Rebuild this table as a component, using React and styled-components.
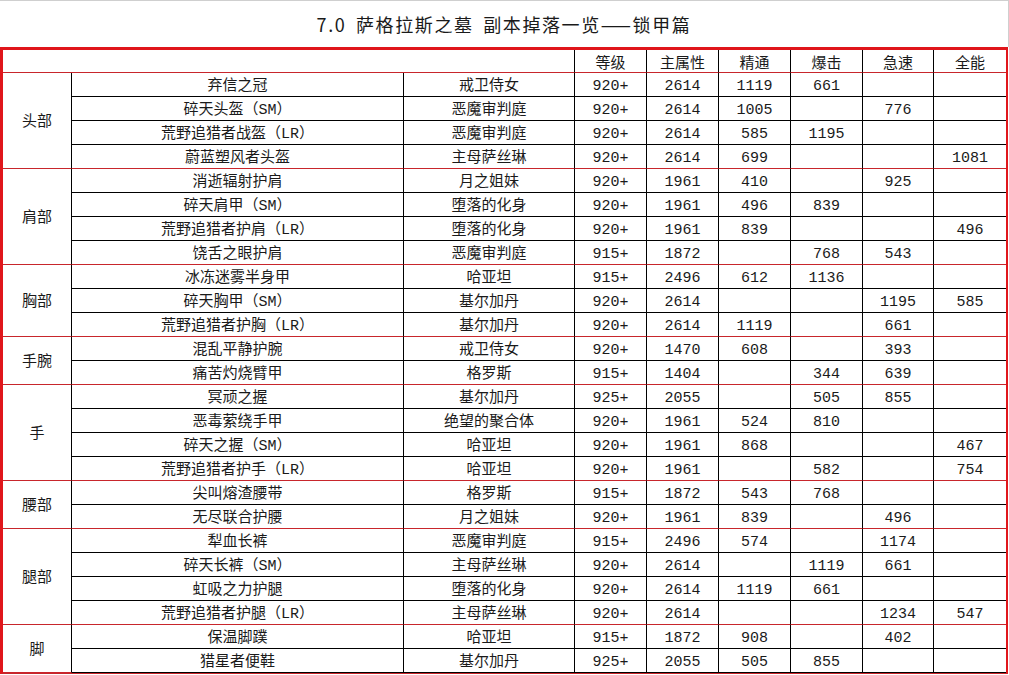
import React from 'react';
import styled, { createGlobalStyle } from 'styled-components';

const GlobalStyle = createGlobalStyle`
  html, body {
    margin: 0;
    padding: 0;
    background: #ffffff;
  }
  body {
    font-family: "Liberation Mono", "Noto Sans CJK SC", monospace;
    color: #111;
  }
`;

const RED = '#e0161b';
const LINE_RED = '#c8262c';

const Page = styled.div`
  width: 1009px;
`;

const Title = styled.div`
  height: 46px;
  border-top: 1px solid #cfcfcf;
  border-right: 1px solid #cfcfcf;
  display: flex;
  align-items: center;
  justify-content: center;
  font-family: "Noto Sans CJK SC", sans-serif;
  font-size: 18px;
  letter-spacing: 1.6px;
  word-spacing: 4px;
  color: #1a1a1a;
`;

const Sheet = styled.div`
  width: 1008px;
  box-sizing: border-box;
  border-top: 3px solid ${RED};
  border-left: 3px solid ${RED};
  border-right: 2px solid ${RED};
  border-bottom: 1px solid ${LINE_RED};
  display: grid;
  grid-template-columns: 69px 332px 171px 72px 72px 72px 72px 71px 72px;
  grid-template-rows: 23px;
  grid-auto-rows: 24px;
`;

const Cell = styled.div`
  box-sizing: border-box;
  padding-top: ${p => (p.$head ? 1 : 3)}px;
  border-right: ${p => (p.$last ? 'none' : '1px solid #000')};
  border-bottom: 1px solid ${p => (p.$sep ? LINE_RED : '#000')};
  font-size: 15px;
  line-height: 21px;
  text-align: center;
  white-space: nowrap;
  overflow: hidden;
  color: #1a1a1a;
`;

const HeadBlank = styled(Cell)`
  grid-column: span 3;
  border-bottom-color: ${LINE_RED};
`;

const HeadCell = styled(Cell)`
  border-bottom-color: ${LINE_RED};
  font-family: "Noto Sans CJK SC", sans-serif;
`;

const GroupCell = styled(Cell)`
  grid-row: span ${p => p.$span};
  padding-top: 0;
  padding-bottom: 2px;
  display: flex;
  align-items: center;
  justify-content: center;
  border-bottom-color: ${LINE_RED};
  font-family: "Noto Sans CJK SC", sans-serif;
`;

const heads = ['等级', '主属性', '精通', '爆击', '急速', '全能'];

const groups = [
  ['头部', [
    ['弃信之冠', '戒卫侍女', '920+', '2614', '1119', '661', '', ''],
    ['碎天头盔（SM）', '恶魔审判庭', '920+', '2614', '1005', '', '776', ''],
    ['荒野追猎者战盔（LR）', '恶魔审判庭', '920+', '2614', '585', '1195', '', ''],
    ['蔚蓝塑风者头盔', '主母萨丝琳', '920+', '2614', '699', '', '', '1081'],
  ]],
  ['肩部', [
    ['消逝辐射护肩', '月之姐妹', '920+', '1961', '410', '', '925', ''],
    ['碎天肩甲（SM）', '堕落的化身', '920+', '1961', '496', '839', '', ''],
    ['荒野追猎者护肩（LR）', '堕落的化身', '920+', '1961', '839', '', '', '496'],
    ['饶舌之眼护肩', '恶魔审判庭', '915+', '1872', '', '768', '543', ''],
  ]],
  ['胸部', [
    ['冰冻迷雾半身甲', '哈亚坦', '915+', '2496', '612', '1136', '', ''],
    ['碎天胸甲（SM）', '基尔加丹', '920+', '2614', '', '', '1195', '585'],
    ['荒野追猎者护胸（LR）', '基尔加丹', '920+', '2614', '1119', '', '661', ''],
  ]],
  ['手腕', [
    ['混乱平静护腕', '戒卫侍女', '920+', '1470', '608', '', '393', ''],
    ['痛苦灼烧臂甲', '格罗斯', '915+', '1404', '', '344', '639', ''],
  ]],
  ['手', [
    ['冥顽之握', '基尔加丹', '925+', '2055', '', '505', '855', ''],
    ['恶毒萦绕手甲', '绝望的聚合体', '920+', '1961', '524', '810', '', ''],
    ['碎天之握（SM）', '哈亚坦', '920+', '1961', '868', '', '', '467'],
    ['荒野追猎者护手（LR）', '哈亚坦', '920+', '1961', '', '582', '', '754'],
  ]],
  ['腰部', [
    ['尖叫熔渣腰带', '格罗斯', '915+', '1872', '543', '768', '', ''],
    ['无尽联合护腰', '月之姐妹', '920+', '1961', '839', '', '496', ''],
  ]],
  ['腿部', [
    ['犁血长裤', '恶魔审判庭', '915+', '2496', '574', '', '1174', ''],
    ['碎天长裤（SM）', '主母萨丝琳', '920+', '2614', '', '1119', '661', ''],
    ['虹吸之力护腿', '堕落的化身', '920+', '2614', '1119', '661', '', ''],
    ['荒野追猎者护腿（LR）', '主母萨丝琳', '920+', '2614', '', '', '1234', '547'],
  ]],
  ['脚', [
    ['保温脚蹼', '哈亚坦', '915+', '1872', '908', '', '402', ''],
    ['猎星者便鞋', '基尔加丹', '925+', '2055', '505', '855', '', ''],
  ]],
];

const App = () => {
  return (
    <Page>
      <GlobalStyle />
      <Title>7.0 萨格拉斯之墓 副本掉落一览——锁甲篇</Title>
      <Sheet>
        <HeadBlank $head />
        {heads.map((h, i) => (
          <HeadCell key={h} $head $last={i === heads.length - 1}>{h}</HeadCell>
        ))}
        {groups.map(([part, rows], gi) => (
          <React.Fragment key={part}>
            <GroupCell $span={rows.length} $sep>{part}</GroupCell>
            {rows.map((row, ri) =>
              row.map((v, ci) => (
                <Cell
                  key={`${gi}-${ri}-${ci}`}
                  $sep={ri === rows.length - 1 && gi !== groups.length - 1}
                  $last={ci === row.length - 1}
                >
                  {v}
                </Cell>
              ))
            )}
          </React.Fragment>
        ))}
      </Sheet>
    </Page>
  );
};

export default App;
